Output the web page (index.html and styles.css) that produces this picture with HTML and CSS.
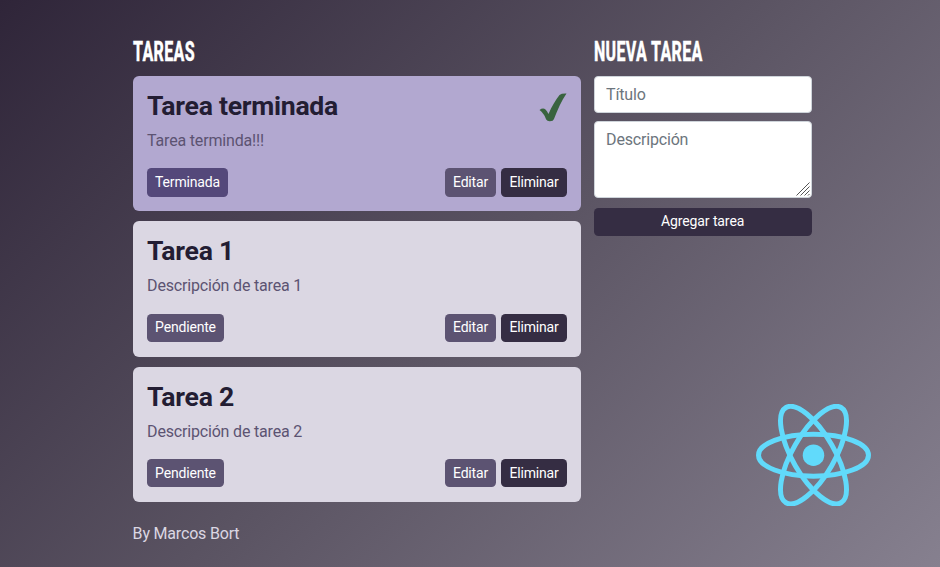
FILE: index.html
```html
<!DOCTYPE html>
<html lang="es">
<head>
<meta charset="utf-8">
<title>Tareas</title>
<link rel="stylesheet" href="styles.css">
</head>
<body>
<div class="container">
  <main class="tasks">
    <h2 class="heading"><span class="heading-text">TAREAS</span></h2>
    <article class="card done">
      <h3 class="title">Tarea terminada</h3>
      <p class="description">Tarea terminda!!!</p>
      <div class="actions"><button class="btn state">Terminada</button><button class="btn edit">Editar</button><button class="btn dark">Eliminar</button></div>
      <svg class="check" viewBox="0 0 28 29"><path d="M.5 17Q4 14.500 6.500 16.500Q8.200 18 9.500 21C13 13 16.500 7 20.500 2Q22.500 .4 27.500 .6C22.500 8 18.500 17 15 26Q14.300 28.300 11 28.300Q8.300 28.500 7.200 26.500C5.500 22 4 20 .5 17Z"/></svg>
    </article>
    <article class="card">
      <h3 class="title">Tarea 1</h3>
      <p class="description">Descripción de tarea 1</p>
      <div class="actions"><button class="btn state">Pendiente</button><button class="btn edit">Editar</button><button class="btn dark">Eliminar</button></div>
    </article>
    <article class="card">
      <h3 class="title">Tarea 2</h3>
      <p class="description">Descripción de tarea 2</p>
      <div class="actions"><button class="btn state">Pendiente</button><button class="btn edit">Editar</button><button class="btn dark">Eliminar</button></div>
    </article>
    <footer class="footer">By Marcos Bort</footer>
  </main>
  <aside class="new-task">
    <h2 class="heading"><span class="heading-text">NUEVA TAREA</span></h2>
    <input class="field" placeholder="Título">
    <div class="area-wrap">
      <textarea class="field area" placeholder="Descripción"></textarea>
      <svg class="grip" viewBox="0 0 14 14"><path d="M.5 13.500L13.500 .5M4.500 13.500L13.500 4.500M8.500 13.500L13.500 8.500M12 13.500L13.500 12"/></svg>
    </div>
    <button class="btn dark submit">Agregar tarea</button>
  </aside>
</div>
<svg class="logo" viewBox="-11.500 -10.232 23 20.463">
  <circle r="2.150" fill="#61dafb"/>
  <g fill="none" stroke="#61dafb">
    <ellipse rx="11" ry="4.200"/>
    <ellipse rx="11" ry="4.200" transform="rotate(60)"/>
    <ellipse rx="11" ry="4.200" transform="rotate(120)"/>
  </g>
</svg>
</body>
</html>
```
FILE: styles.css
```css
* { box-sizing: border-box; }
body {
  margin: 0;
  height: 567px;
  overflow: hidden;
  background: linear-gradient(135deg, #2f2539 0%, #5a5362 50%, #86808f 100%);
  font-family: Roboto, sans-serif;
  font-size: 16px;
  line-height: 24px;
  letter-spacing: -.18px;
  color: #dbd7e3;
}
.container {
  display: grid;
  grid-template-columns: 448.500px 218px;
  column-gap: 12.500px;
  padding: 35px 0 0 132.600px;
}
.heading {
  height: 32px;
  margin: 0 0 9px;
  padding-top: 1px;
  font-size: 27.500px;
  line-height: 32px;
  font-weight: 800;
  letter-spacing: .5px;
  color: #fff;
  white-space: nowrap;
}
.heading-text {
  display: inline-block;
  transform: scaleX(.583);
  transform-origin: left;
  -webkit-text-stroke: .3px #fff;
}
.card {
  position: relative;
  height: 135.4px;
  margin-bottom: 9.900px;
  padding: 14px 14.5px;
  border-radius: 6px;
  background: #dbd7e3;
}
.done { background: #b2a8d0; }
.title {
  margin: 0 0 7px;
  font-size: 26.600px;
  line-height: 32px;
  font-weight: 700;
  letter-spacing: -.27px;
  color: #231d33;
}
.description {
  margin: 0 0 15.300px;
  color: #5c5372;
}
.actions { display: flex; gap: 5.500px; }
.btn {
  height: 28.500px;
  padding: 0 8px;
  border: 0;
  border-radius: 4.500px;
  font: 14px/27px Roboto, sans-serif;
  letter-spacing: -.18px;
  color: #fff;
  background: #5c5372;
}
.state { margin-right: auto; }
.done .state { background: #54487a; }
.dark { background: #352d43; }
.check {
  position: absolute;
  top: 17px;
  right: 14px;
  width: 28px;
  height: 29px;
  fill: #39633f;
}
.footer { margin-top: 19.800px; }
.new-task {
  display: flex;
  flex-direction: column;
}
.field {
  display: block;
  width: 100%;
  height: 37px;
  padding: 5px 11.500px 6px;
  border: 1px solid #ced4da;
  border-radius: 4px;
  background: #fff;
  font: 16px/24px Roboto, sans-serif;
  letter-spacing: -.18px;
}
.field::placeholder { color: #6c757d; opacity: 1; }
.area-wrap { position: relative; margin: 8px 0 9.500px; }
.area { height: 77px; padding-top: 6px; resize: none; }
.grip {
  position: absolute;
  right: 2px;
  bottom: 2px;
  width: 14px;
  height: 14px;
  fill: none;
  stroke: #555;
}
.submit { width: 100%; letter-spacing: -.1px; }
.logo {
  position: absolute;
  left: 756.200px;
  top: 404px;
  width: 115px;
  height: 102.300px;
}
```
